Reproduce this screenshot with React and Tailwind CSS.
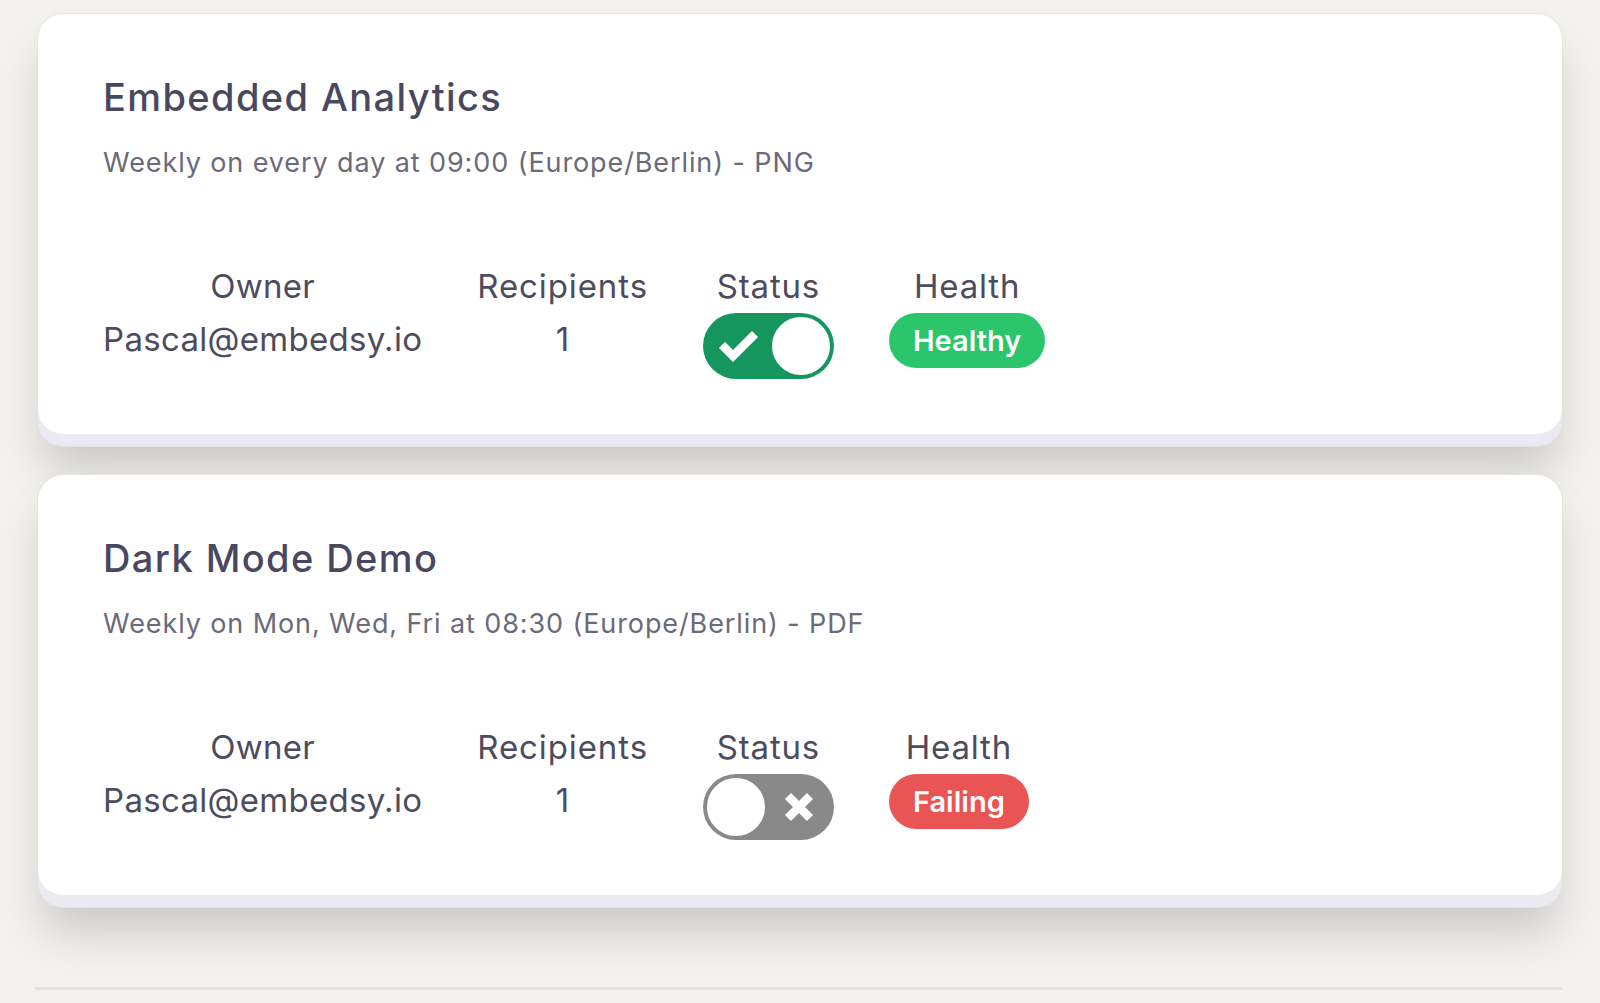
import React from "react";

function Toggle({ on }) {
  if (on) {
    return (
      <div className="relative w-[131px] h-[66px] rounded-full bg-[#15965f]">
        <svg className="absolute left-[15px] top-[17px]" width="42" height="32" viewBox="0 0 42 32">
          <path d="M4 15 L15 26 L37 4" fill="none" stroke="white" strokeWidth="8.5" strokeLinecap="butt" strokeLinejoin="miter" />
        </svg>
        <div className="absolute right-[1px] top-[1px] w-[64px] h-[64px] rounded-full bg-white border-[3px] border-[#15965f]" />
      </div>
    );
  }
  return (
    <div className="relative w-[131px] h-[66px] rounded-full bg-[#898989]">
      <div className="absolute left-[1px] top-[1px] w-[64px] h-[64px] rounded-full bg-white border-[3px] border-[#898989]" />
      <svg className="absolute left-[80px] top-[17px]" width="32" height="32" viewBox="0 0 32 32">
        <path d="M5 5 L27 27 M27 5 L5 27" fill="none" stroke="white" strokeWidth="8.5" />
      </svg>
    </div>
  );
}

function Card({ title, subtitle, on, health }) {
  return (
    <div className="rounded-[26px] bg-[#ebe9f1] pb-[12px] border border-[#e4e3de] shadow-[0_30px_45px_-6px_rgba(0,0,0,0.17)]">
      <div className="rounded-[25px] bg-white pl-[65px] pt-[61px] pb-[55px]">
        <h2 className="text-[38px] leading-[44px] text-[#4a4860] font-medium tracking-[1.4px]">{title}</h2>
        <p className="mt-[28px] text-[27px] leading-[32px] text-[#6b6a79] tracking-[0.9px]">{subtitle}</p>
        <div className="mt-[86px] flex items-start gap-[55px] text-[#4d4c5e] text-[33px] leading-[42px] tracking-[0.3px]">
          <div className="flex flex-col items-center">
            <span>Owner</span>
            <span className="mt-[11px]">Pascal@embedsy.io</span>
          </div>
          <div className="flex flex-col items-center">
            <span className="tracking-[0.9px]">Recipients</span>
            <span className="mt-[11px]">1</span>
          </div>
          <div className="flex flex-col items-center">
            <span className="tracking-[0.8px]">Status</span>
            <div className="mt-[6px]">
              <Toggle on={on} />
            </div>
          </div>
          <div className="flex flex-col items-center">
            <span className="tracking-[0.8px]">Health</span>
            <div
              className={
                "mt-[6px] h-[55px] px-[24px] rounded-full flex items-center text-white font-semibold text-[29px] tracking-normal " +
                (health === "Healthy" ? "bg-[#2bc56c]" : "bg-[#e95455]")
              }
            >
              {health}
            </div>
          </div>
        </div>
      </div>
    </div>
  );
}

export default function App() {
  return (
    <div
      className="min-h-screen bg-[#f3f2ee] px-[37px] pt-[13px] pb-[10px]"
      style={{ fontFamily: "Inter, 'Noto Sans', sans-serif" }}
    >
      <div className="flex flex-col gap-[27px]">
        <Card
          title="Embedded Analytics"
          subtitle="Weekly on every day at 09:00 (Europe/Berlin) - PNG"
          on={true}
          health="Healthy"
        />
        <Card
          title="Dark Mode Demo"
          subtitle="Weekly on Mon, Wed, Fri at 08:30 (Europe/Berlin) - PDF"
          on={false}
          health="Failing"
        />
      </div>
      <div className="mt-[79px] h-[3px] bg-[#e2e1da] mr-[1px] ml-[-2px]" />
    </div>
  );
}
